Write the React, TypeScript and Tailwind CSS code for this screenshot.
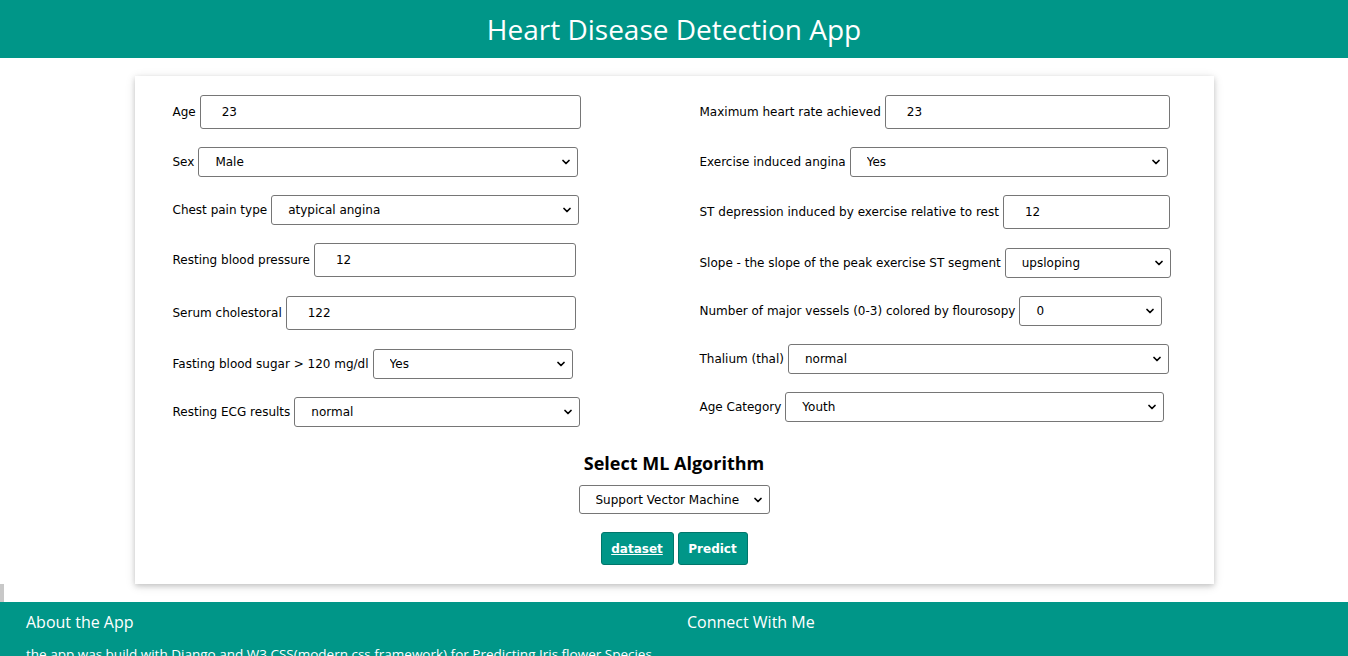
import { ChevronDown } from "lucide-react";

type Field = {
  label: string;
  kind: "input" | "select";
  value: string;
  width: number;
  gap: number;
};

const LEFT: Field[] = [
  { label: "Age", kind: "input", value: "23", width: 381, gap: 0 },
  { label: "Sex", kind: "select", value: "Male", width: 380, gap: 18 },
  { label: "Chest pain type", kind: "select", value: "atypical angina", width: 308, gap: 18 },
  { label: "Resting blood pressure", kind: "input", value: "12", width: 262, gap: 18 },
  { label: "Serum cholestoral", kind: "input", value: "122", width: 290, gap: 19 },
  { label: "Fasting blood sugar > 120 mg/dl", kind: "select", value: "Yes", width: 200, gap: 19 },
  { label: "Resting ECG results", kind: "select", value: "normal", width: 286, gap: 18 },
];

const RIGHT: Field[] = [
  { label: "Maximum heart rate achieved", kind: "input", value: "23", width: 285, gap: 0 },
  { label: "Exercise induced angina", kind: "select", value: "Yes", width: 318, gap: 18 },
  { label: "ST depression induced by exercise relative to rest", kind: "input", value: "12", width: 167, gap: 18 },
  { label: "Slope - the slope of the peak exercise ST segment", kind: "select", value: "upsloping", width: 166, gap: 19 },
  { label: "Number of major vessels (0-3) colored by flourosopy", kind: "select", value: "0", width: 143, gap: 18 },
  { label: "Thalium (thal)", kind: "select", value: "normal", width: 381, gap: 18 },
  { label: "Age Category", kind: "select", value: "Youth", width: 379, gap: 18 },
];

function Row({ f }: { f: Field }) {
  return (
    <div className="flex items-center" style={{ marginTop: f.gap }}>
      <label className="mr-[4px] whitespace-nowrap text-[12px] leading-[16px] text-black">{f.label}</label>
      {f.kind === "input" ? (
        <input
          readOnly
          value={f.value}
          style={{ width: f.width }}
          className="h-[34px] rounded-[3px] border border-[#767676] bg-white pl-[21px] text-[12px] text-black outline-none"
        />
      ) : (
        <div className="relative" style={{ width: f.width }}>
          <select
            value={f.value}
            onChange={() => {}}
            className="h-[30px] w-full appearance-none rounded-[3px] border border-[#767676] bg-white pl-[16px] text-[12px] text-black outline-none"
          >
            <option>{f.value}</option>
          </select>
          <ChevronDown size={12} strokeWidth={3.5} className="pointer-events-none absolute right-[6px] top-[9px] text-black" />
        </div>
      )}
    </div>
  );
}

export default function App() {
  return (
    <div className="min-h-screen bg-white" style={{ fontFamily: "'DejaVu Sans', Verdana, sans-serif" }}>
      {/* Header */}
      <header className="flex h-[58px] items-center justify-center bg-[#009688]">
        <h1 className="text-[28px] font-normal text-white" style={{ fontFamily: "'Open Sans', sans-serif" }}>
          Heart Disease Detection App
        </h1>
      </header>

      <div className="h-[18px]" />

      {/* Form card */}
      <div className="mx-auto w-[1079px] bg-white px-[38px] pb-[19px] pt-[19px] shadow-[0_2px_5px_0_rgba(0,0,0,0.16),0_2px_10px_0_rgba(0,0,0,0.12)]">
        <div className="grid grid-cols-[527px_1fr]">
          <div>
            {LEFT.map((f) => (
              <Row key={f.label} f={f} />
            ))}
          </div>
          <div>
            {RIGHT.map((f) => (
              <Row key={f.label} f={f} />
            ))}
          </div>
        </div>

        <div className="mt-[24px] flex flex-col items-center">
          <h3 className="text-[18px] font-bold leading-[24px] text-black" style={{ fontFamily: "'Open Sans', sans-serif" }}>
            Select ML Algorithm
          </h3>
          <div className="relative mt-[10px] w-[191px]">
            <select
              value="svm"
              onChange={() => {}}
              className="h-[29px] w-full appearance-none rounded-[3px] border border-[#767676] bg-white pl-[16px] text-[12px] text-black outline-none"
            >
              <option value="svm">Support Vector Machine</option>
            </select>
            <ChevronDown size={12} strokeWidth={3.5} className="pointer-events-none absolute right-[6px] top-[9px] text-black" />
          </div>
          <div className="mt-[18px] flex gap-[4px]">
            <a
              href="#"
              className="flex h-[33px] w-[73px] items-center justify-center rounded-[3px] border border-[#00766b] bg-[#009688] text-[12px] font-bold text-white underline"
            >
              dataset
            </a>
            <button className="flex h-[33px] w-[70px] items-center justify-center rounded-[3px] border border-[#00766b] bg-[#009688] text-[12px] font-bold text-white">
              Predict
            </button>
          </div>
        </div>
      </div>

      <div className="h-[18px]">
        <div className="h-full w-[4px] bg-[#c8c8c8]" />
      </div>

      {/* Footer */}
      <footer className="bg-[#009688] pb-6 text-white">
        <div className="grid grid-cols-[661px_1fr] pl-[26px] pt-[8px]">
          <div>
            <h4 className="text-[16px] leading-[24px]" style={{ fontFamily: "'Open Sans', sans-serif" }}>
              About the App
            </h4>
            <p className="mt-[10px] text-[13.5px] leading-[20px]" style={{ fontFamily: "'Open Sans', sans-serif" }}>
              the app was build with Django and W3 CSS(modern css framework) for Predicting Iris flower Species
            </p>
          </div>
          <div>
            <h4 className="text-[16px] leading-[24px]" style={{ fontFamily: "'Open Sans', sans-serif" }}>
              Connect With Me
            </h4>
          </div>
        </div>
      </footer>
    </div>
  );
}
